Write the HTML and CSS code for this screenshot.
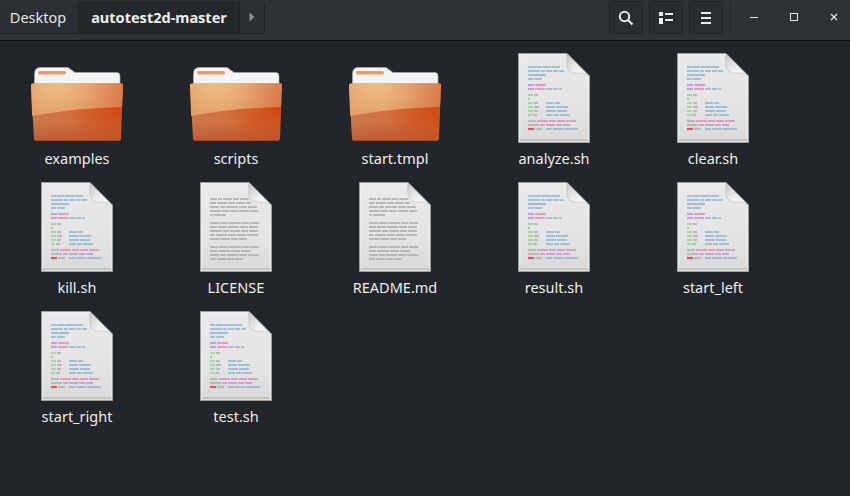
FILE: index.html
```html
<!DOCTYPE html>
<html lang="en">
<head>
<meta charset="utf-8">
<title>autotest2d-master</title>
<link rel="stylesheet" href="styles.css">
</head>
<body>
<svg class="defs" width="0" height="0" aria-hidden="true">
  <defs>
    <linearGradient id="paper" x1="0" y1="0" x2="0" y2="1">
      <stop offset="0" stop-color="#e9e9e9"/><stop offset="0.6" stop-color="#e4e4e4"/><stop offset="1" stop-color="#d9d9d9"/>
    </linearGradient>
    <linearGradient id="curl" x1="0" y1="0" x2="1" y2="1">
      <stop offset="0" stop-color="#c4c4c4"/><stop offset="0.5" stop-color="#ededed"/><stop offset="1" stop-color="#ffffff"/>
    </linearGradient>
    <radialGradient id="folderGlow" gradientUnits="userSpaceOnUse" cx="27" cy="30" r="78">
      <stop offset="0" stop-color="#edc286"/><stop offset="0.45" stop-color="#e4a26c"/><stop offset="1" stop-color="#d66f42"/>
    </radialGradient>
    <radialGradient id="folderLow" gradientUnits="userSpaceOnUse" cx="88" cy="58" r="90">
      <stop offset="0" stop-color="#d04a12"/><stop offset="0.55" stop-color="#d26f3e"/><stop offset="1" stop-color="#c87a4c"/>
    </radialGradient>
    <linearGradient id="folderFoot" x1="0" y1="0" x2="0" y2="1">
      <stop offset="0" stop-color="#b0482a" stop-opacity="0"/><stop offset="1" stop-color="#b0482a" stop-opacity=".55"/>
    </linearGradient>
    <symbol id="folder" viewBox="0 0 96 96">
      <path d="M5.5 24 Q5.5 17.5 11 17.5 H39 L46 22.5 H88 Q91 22.5 91 26 V50 H5.5Z" fill="#f4f4f4" stroke="#a9a9a9" stroke-width="0.7"/>
      <rect x="9" y="21" width="28" height="3.5" rx="1.7" fill="#ec9a6b"/>
      <path d="M4 33.5 H93 Q94 33.5 94 35 L92 88 Q92 90.5 89 90.5 H7 Q5 90.5 5 88 L2 35 Q2 33.5 4 33.5Z" fill="url(#folderLow)"/>
      <path d="M4 33.5 H93 Q94 33.5 94 35 L93 57 Q45 58 3.1 66 L2 35 Q2 33.5 4 33.5Z" fill="url(#folderGlow)"/>
      <path d="M4.4 72 H92.4 L92 88 Q92 90.5 89 90.5 H7 Q5 90.5 5 88Z" fill="url(#folderFoot)"/>
      <path d="M6 90.5 H91" stroke="#a8481f" stroke-width="1"/>
    </symbol>
    <symbol id="sheet" viewBox="0 0 96 96">
      <path d="M12.5 3.5 H61 L83.5 26 V92.5 H12.5Z" fill="url(#paper)" stroke="#a0a0a0"/>
      <path d="M14 5 H60 L82 27 V91 H14Z" fill="none" stroke="#f8f8f8" stroke-opacity="0.5"/>
      <path d="M14 90 H82" stroke="#c4c4c4" stroke-width="2"/>
    </symbol>
    <symbol id="curlmark" viewBox="0 0 96 96">
      <path d="M61 4 Q60 14 62 19 Q65 24 72 23 Q78 22 83 26 Z" fill="url(#curl)" stroke="#bcbcbc" stroke-width="0.6"/>
    </symbol>
    <symbol id="code" viewBox="0 0 96 96">
      <use href="#sheet"/>
      <g class="ln blue">
        <path stroke-dasharray="5 .5 8 .5 9 .5 9" d="M22 17 H54"/>
        <path stroke-dasharray="12 1 4 1 6 1 5 1 6" d="M22 21 H58"/>
        <path d="M22 25 H40"/>
        <path stroke-dasharray="5 1 8" d="M22 29 H36"/>
        <path stroke-dasharray="6 1 5 1 3" d="M40 39 H56"/>
        <path stroke-dasharray="8 1 5" d="M40 53 H54"/>
        <path stroke-dasharray="9 1 12" d="M40 57 H62"/>
        <path stroke-dasharray="10 1 10" d="M40 61 H61"/>
        <path stroke-dasharray="7 1 5 1 10" d="M40 65 H64"/>
        <path stroke-dasharray="6 1 10 1 14" d="M40 79 H72"/>
      </g>
      <g class="ln purple"><path d="M22 35 H28"/><path d="M22 39 H28"/></g>
      <g class="ln pink">
        <path d="M29 35 H40"/><path d="M29 39 H39"/>
        <path stroke-dasharray="11 1 7 1 8 1 10" d="M31 71 H70"/>
        <path stroke-dasharray="5 1 9 1 6 1 8" d="M34 75 H64"/>
      </g>
      <g class="ln green"><path d="M22 45 H27"/><path d="M22 53 H27"/><path d="M22 57 H27"/><path d="M22 61 H27"/><path d="M22 65 H26"/></g>
      <g class="ln gray">
        <path d="M28 45 H32"/><path d="M22 49 H24"/><path d="M28 53 H32"/><path d="M28 57 H33"/><path d="M28 61 H32"/><path d="M27 65 H31"/>
        <path d="M22 71 H30"/><path d="M22 75 H33"/><path d="M29 79 H36"/>
      </g>
      <path class="ln red" d="M22 79 H28"/>
      <use href="#curlmark"/>
    </symbol>
    <symbol id="text" viewBox="0 0 96 96">
      <use href="#sheet"/>
      <g class="ln dim">
        <path stroke-dasharray="7 1 4 1 9 1 6 1 9" d="M22 20 H61"/>
        <path stroke-dasharray="6 1 10 1 7 1 9 1 6" d="M22 24 H63"/>
        <path stroke-dasharray="9 1 5 1 12 1 8 1 9" d="M22 28 H70"/>
        <path stroke-dasharray="11 1 7 1 8 1 10 1 8" d="M22 32 H70"/>
        <path stroke-dasharray="3 1 12" d="M22 36 H38"/>
        <path stroke-dasharray="9 1 8 1 12 1 7 1 10" d="M22 44 H71"/>
        <path stroke-dasharray="7 1 9 1 11 1 8 1 10" d="M22 48 H70"/>
        <path stroke-dasharray="12 1 6 1 10 1 7 1 10" d="M22 52 H70"/>
        <path stroke-dasharray="5 1 11 1 8 1 9 1 12" d="M22 56 H70"/>
        <path stroke-dasharray="10 1 9 1 7 1 9" d="M22 60 H59"/>
        <path stroke-dasharray="8 1 9 1 12 1 7 1 10" d="M22 68 H71"/>
        <path stroke-dasharray="7 1 12 1 9 1 10" d="M22 72 H65"/>
        <path stroke-dasharray="9 1 6 1 11 1 8 1 11" d="M22 76 H71"/>
        <path stroke-dasharray="6 1 9 1 7 1 8" d="M22 80 H56"/>
      </g>
      <use href="#curlmark"/>
    </symbol>
  </defs>
</svg>

<header class="headerbar">
  <nav class="pathbar">
    <button class="crumb crumb-parent">Desktop</button>
    <button class="crumb crumb-current">autotest2d-master</button>
    <button class="crumb crumb-more" aria-label="More">
      <svg width="6" height="10" viewBox="0 0 6 10"><path d="M0.5 0.5 L5.5 5 L0.5 9.5Z" fill="#8c9093"/></svg>
    </button>
  </nav>
  <div class="tools">
    <button class="tool" aria-label="Search">
      <svg width="16" height="16" viewBox="0 0 16 16"><circle cx="6.5" cy="6.5" r="4.7" fill="none" stroke="#e6e6e6" stroke-width="2"/><path d="M10 10 L14.5 14.5" stroke="#e6e6e6" stroke-width="2.2"/></svg>
    </button>
    <button class="tool" aria-label="View">
      <svg width="14" height="12" viewBox="0 0 14 12"><path d="M0 0H4V4H0ZM0 6H4V12H0Z" fill="#eee"/><path d="M6 1H14V3H6ZM6 7H14V9H6Z" fill="#eee"/></svg>
    </button>
    <button class="tool" aria-label="Menu">
      <svg width="12" height="12" viewBox="0 0 12 12"><path d="M1 0H11V2H1ZM1 5H11V7H1ZM1 10H11V12H1Z" fill="#eee"/></svg>
    </button>
  </div>
  <div class="winctl">
    <button class="ctl" aria-label="Minimize"><svg width="10" height="10" viewBox="0 0 10 10"><path d="M1 5.5H9" stroke="#e6e6e6" stroke-width="1"/></svg></button>
    <button class="ctl" aria-label="Maximize"><svg width="10" height="10" viewBox="0 0 10 10"><rect x="1.5" y="1.5" width="7" height="7" fill="none" stroke="#e6e6e6" stroke-width="1"/></svg></button>
    <button class="ctl" aria-label="Close"><svg width="10" height="10" viewBox="0 0 10 10"><path d="M2 2L8 8M8 2L2 8" stroke="#e6e6e6" stroke-width="1.2"/></svg></button>
  </div>
</header>

<main class="grid">
  <div class="item"><svg class="icon"><use href="#folder"/></svg><span class="name">examples</span></div>
  <div class="item"><svg class="icon"><use href="#folder"/></svg><span class="name">scripts</span></div>
  <div class="item"><svg class="icon"><use href="#folder"/></svg><span class="name">start.tmpl</span></div>
  <div class="item"><svg class="icon"><use href="#code"/></svg><span class="name">analyze.sh</span></div>
  <div class="item"><svg class="icon"><use href="#code"/></svg><span class="name">clear.sh</span></div>
  <div class="item"><svg class="icon"><use href="#code"/></svg><span class="name">kill.sh</span></div>
  <div class="item"><svg class="icon"><use href="#text"/></svg><span class="name">LICENSE</span></div>
  <div class="item"><svg class="icon"><use href="#text"/></svg><span class="name">README.md</span></div>
  <div class="item"><svg class="icon"><use href="#code"/></svg><span class="name">result.sh</span></div>
  <div class="item"><svg class="icon"><use href="#code"/></svg><span class="name">start_left</span></div>
  <div class="item"><svg class="icon"><use href="#code"/></svg><span class="name">start_right</span></div>
  <div class="item"><svg class="icon"><use href="#code"/></svg><span class="name">test.sh</span></div>
</main>
</body>
</html>
```
FILE: styles.css
```css
* { box-sizing: border-box; }
html, body { margin: 0; height: 100%; }
body {
  background: #22262a;
  color: #e8e8e8;
  font-family: "Noto Sans", "Open Sans", sans-serif;
  font-size: 14.5px;
  overflow: hidden;
}
.defs { display: block; height: 0; }
button {
  font: inherit;
  color: inherit;
  border: 0;
  padding: 0;
  background: none;
  display: flex;
  align-items: center;
  justify-content: center;
}

.headerbar {
  display: flex;
  height: 41px;
  padding-top: 1px;
  background: #2e3235;
  border-bottom: 1px solid #0d0f10;
  overflow: hidden;
}
.pathbar {
  display: flex;
  flex: none;
  height: 33px;
  width: 265px;
  border: 1px solid #1f2224;
  border-left: 0;
  border-top: 0;
  border-radius: 0 3px 3px 0;
}
.crumb { height: 100%; }
.crumb-parent {
  width: 79px;
  padding-right: 2px;
  background: #2b2f32;
  color: #e4e4e4;
  border-right: 1px solid #1a1c1e;
}
.crumb-current {
  width: 161px;
  background: #24282b;
  font-weight: 700;
  color: #eeeeee;
  border-right: 1px solid #1f2224;
}
.crumb-more { flex: 1; background: #2b2f32; }

.tools { display: flex; flex: none; gap: 6px; margin-left: 344px; }
.tool {
  width: 34px;
  height: 33px;
  background: #2a2d30;
  border: 1px solid #1f2224;
  border-radius: 3px;
}
.winctl {
  display: flex;
  flex: none;
  margin-left: 7px;
  padding-left: 3px;
  height: 33px;
  border-left: 1px solid #26292c;
}
.ctl { width: 40px; height: 32px; flex: none; }

.grid {
  display: grid;
  grid-template-columns: repeat(5, 154px);
  grid-auto-rows: 129px;
  column-gap: 5px;
  padding-top: 9px;
}
.item {
  display: flex;
  flex-direction: column;
  align-items: center;
}
.icon { width: 96px; height: 96px; display: block; flex: none; }
.name {
  margin-top: 2px;
  line-height: 20px;
  color: #ececec;
}
.ln { fill: none; stroke-width: 2.2; stroke-opacity: .75; }
.blue { stroke: #8db3cf; }
.purple { stroke: #b78ad8; }
.pink { stroke: #d98cbb; }
.green { stroke: #92d68c; }
.gray { stroke: #acacac; }
.red { stroke: #e05a5a; stroke-opacity: 1; }
.dim { stroke: #b4b4b4; stroke-opacity: .9; }
```
